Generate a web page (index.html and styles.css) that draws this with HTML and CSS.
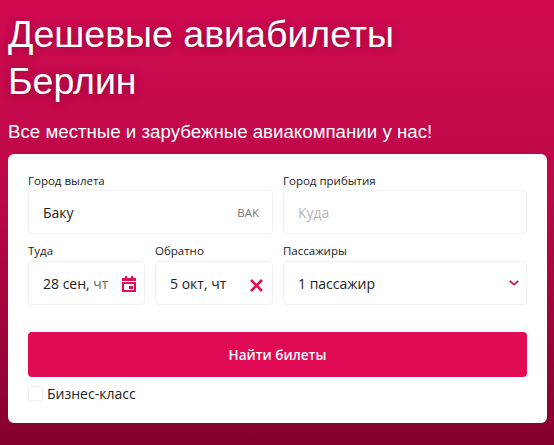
FILE: index.html
```html
<!DOCTYPE html>
<html lang="ru">
<head>
<meta charset="utf-8">
<title>Дешевые авиабилеты Берлин</title>
<link rel="stylesheet" href="styles.css">
</head>
<body>
<main class="hero">
  <h1 class="title">Дешевые авиабилеты<br>Берлин</h1>
  <p class="subtitle">Все местные и зарубежные авиакомпании у нас!</p>
  <form class="card">
    <div class="grid">
      <div class="field">
        <span class="label">Город вылета</span>
        <div class="box"><span>Баку</span><span class="code">BAK</span></div>
      </div>
      <div class="field">
        <span class="label">Город прибытия</span>
        <div class="box"><span class="placeholder">Куда</span></div>
      </div>
      <div class="dates">
        <div class="field">
          <span class="label label-tight">Туда</span>
          <div class="box box-date"><span>28 сен, <span class="muted">чт</span></span>
            <svg class="icon-cal" viewBox="0 0 14 16" width="14" height="16"><path fill="#dd0d56" d="M3 0h2v2h4V0h2v2h3v3H0V2h3zM0 6h14v10H0zm2 2v6h10V8zm5 2h4v3H7z"/></svg>
          </div>
        </div>
        <div class="field">
          <span class="label label-tight">Обратно</span>
          <div class="box box-date box-clear"><span>5 окт, чт</span>
            <svg class="icon-x" viewBox="0 0 13 13" width="13" height="13"><path stroke="#dd0d56" stroke-width="2.6" d="M1 1l11 11M12 1L1 12"/></svg>
          </div>
        </div>
      </div>
      <div class="field">
        <span class="label label-tight">Пассажиры</span>
        <div class="box box-pass"><span>1 пассажир</span>
          <svg class="icon-chev" viewBox="0 0 10 6" width="10" height="6"><path fill="none" stroke="#c8104f" stroke-width="1.8" d="M.7.8L5 4.6 9.3.8"/></svg>
        </div>
      </div>
    </div>
    <button class="submit" type="button">Найти билеты</button>
    <label class="check"><span class="checkbox"></span>Бизнес-класс</label>
  </form>
</main>
</body>
</html>
```
FILE: styles.css
```css
* { box-sizing: border-box; }
html, body { margin: 0; height: 100%; }
body { background: #85002f; overflow: hidden; }
.hero {
  height: 445px;
  padding: 11px 7px 0 8px;
  background: linear-gradient(180deg, #d00a50 0%, #ba0848 45%, #85002f 100%);
  font-family: "Open Sans", sans-serif;
}
.title {
  margin: 0;
  font: 400 37.5px/47px "Liberation Sans", sans-serif;
  color: #fff;
  text-shadow: 0 1px 8px rgba(80, 0, 30, .45);
}
.subtitle {
  margin: 15px 0 0;
  font: 400 18.7px/24px "Liberation Sans", sans-serif;
  color: #fff;
}
.card {
  margin-top: 10px;
  height: 269px;
  padding: 20px 20px 0;
  background: #fff;
  border-radius: 6px;
}
.grid {
  display: grid;
  grid-template-columns: 245px 244px;
  column-gap: 10px;
  row-gap: 11px;
}
.dates {
  display: grid;
  grid-template-columns: 117px 118px;
  column-gap: 10px;
}
.label {
  display: block;
  height: 16px;
  font-size: 11.5px;
  line-height: 14px;
  color: #222;
}
.label-tight { line-height: 12px; }
.box {
  display: flex;
  align-items: center;
  justify-content: space-between;
  height: 44px;
  padding: 0 13px 0 14px;
  border: 1px solid #f1f1f1;
  border-radius: 4px;
  font-size: 14px;
  color: #222;
}
.code { font-size: 11.5px; color: #777; }
.placeholder { color: #b5b5b5; }
.muted { color: #666; }
.box-date { padding: 0 8px 0 14px; }
.box-clear { padding-right: 9px; }
.box-pass { padding-right: 7px; }
.icon-x { flex: none; margin-top: 4px; }
.icon-cal { flex: none; margin-top: 1px; }
.icon-chev { flex: none; }
.submit {
  display: block;
  width: 499px;
  height: 45px;
  margin-top: 27px;
  border: 0;
  border-radius: 4px;
  background: #e00b54;
  color: #fff;
  font: 600 13.5px "Open Sans", sans-serif;
}
.check {
  display: flex;
  align-items: center;
  gap: 4px;
  margin-top: 9px;
  font-size: 14px;
  line-height: 15px;
  color: #222;
}
.checkbox {
  width: 15px;
  height: 15px;
  border: 1px solid #eee;
  border-radius: 2px;
}
```
